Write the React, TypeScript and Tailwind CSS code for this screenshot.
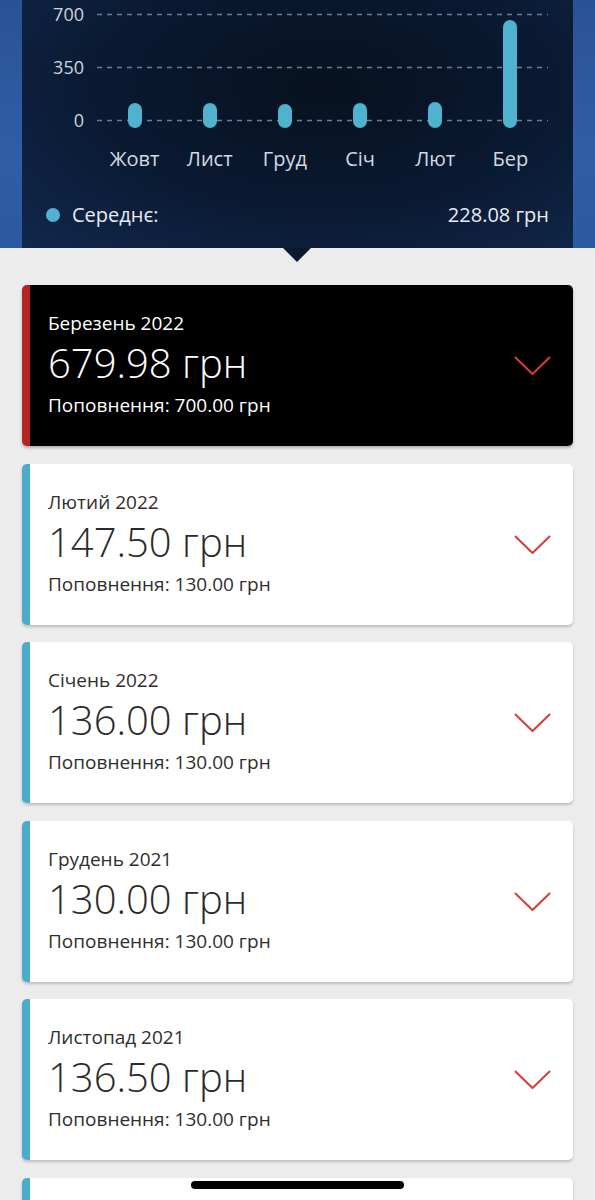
import React from "react";

const bars = [
  { label: "Жовт", top: 103 },
  { label: "Лист", top: 103 },
  { label: "Груд", top: 104 },
  { label: "Січ", top: 103 },
  { label: "Лют", top: 102 },
  { label: "Бер", top: 20 },
];

const cards = [
  { title: "Березень 2022", amount: "679.98 грн", sub: "Поповнення: 700.00 грн", dark: true },
  { title: "Лютий 2022", amount: "147.50 грн", sub: "Поповнення: 130.00 грн" },
  { title: "Січень 2022", amount: "136.00 грн", sub: "Поповнення: 130.00 грн" },
  { title: "Грудень 2021", amount: "130.00 грн", sub: "Поповнення: 130.00 грн" },
  { title: "Листопад 2021", amount: "136.50 грн", sub: "Поповнення: 130.00 грн" },
];

function Chevron() {
  return (
    <svg width="37" height="20" viewBox="0 0 37 20" fill="none">
      <path d="M1.5 1.5 L18.5 18 L35.5 1.5" stroke="#d63d35" strokeWidth="2" strokeLinecap="round" strokeLinejoin="round" />
    </svg>
  );
}

export default function App() {
  return (
    <div
      className="relative w-[595px] h-[1200px] overflow-hidden bg-[#ececec]"
      style={{ fontFamily: '"Open Sans", "Noto Sans", sans-serif' }}
    >
      {/* Header */}
      <div className="relative h-[248px] px-[22px] bg-[linear-gradient(180deg,#2a5296_0%,#2f5ea6_60%,#2b5aa2_100%)]">
        <div className="relative h-full flex flex-col bg-[radial-gradient(ellipse_at_55%_35%,#07111f_0%,#0a1a33_55%,#11284c_100%)]">
          {/* chart */}
          <div className="flex h-[130px]">
            <div className="w-[62px] flex flex-col gap-[25px] text-right text-[18px] text-[#cdd4de]">
              <div className="h-[28px] leading-[28px]">700</div>
              <div className="h-[28px] leading-[28px]">350</div>
              <div className="h-[28px] leading-[28px]">0</div>
            </div>
            <div className="relative ml-[13px] w-[451px] h-[130px]">
              <svg className="absolute inset-0" width="451" height="130">
                {[14, 67, 120].map((y) => (
                  <line key={y} x1="0" x2="451" y1={y + 0.5} y2={y + 0.5} stroke="#6c7d97" strokeWidth="1.3" strokeDasharray="5 5" />
                ))}
              </svg>
              <div className="absolute inset-0 grid grid-cols-6">
                {bars.map((b) => (
                  <div key={b.label} className="relative flex justify-center">
                    <div
                      className="w-[14px] rounded-full bg-[#4fb2cf]"
                      style={{ marginTop: b.top, height: 128 - b.top }}
                    />
                  </div>
                ))}
              </div>
            </div>
          </div>
          <div className="ml-[75px] mt-[15px] w-[451px] grid grid-cols-6 text-[20px] leading-[28px] text-[#d3d9e2]">
            {bars.map((b) => (
              <div key={b.label} className="text-center">
                {b.label}
              </div>
            ))}
          </div>
          <div className="mt-[28px] px-[24px] flex items-center justify-between text-[20px] leading-[28px] text-[#e8ecf2]">
            <div className="flex items-center">
              <span className="w-[14px] h-[14px] rounded-full bg-[#4fb2cf]" />
              <span className="ml-[12px]">Середнє:</span>
            </div>
            <span>228.08 грн</span>
          </div>
        </div>
        {/* pointer */}
        <div className="absolute left-[283px] top-[248px] w-0 h-0 border-l-[14px] border-r-[14px] border-t-[14px] border-l-transparent border-r-transparent border-t-[#0b1a31]" />
      </div>

      {/* Cards */}
      <div className="px-[22px] pt-[37px] flex flex-col gap-[17.5px]">
        {cards.map((c) => (
          <div
            key={c.title}
            className={
              c.dark
                ? "h-[161px] shrink-0 flex items-center rounded-[5px] border-l-[8px] border-[#b5251d] bg-black shadow-[0_2px_3px_rgba(0,0,0,0.25)]"
                : "h-[161px] shrink-0 flex items-center rounded-[5px] border-l-[8px] border-[#4aacca] bg-white shadow-[0_2px_3px_rgba(0,0,0,0.2)]"
            }
          >
            <div className="flex-1 self-start pl-[18px] pt-[25px]">
              <div className={c.dark ? "text-[19px] leading-[26px] text-white" : "text-[19px] leading-[26px] text-[#2e2e2e]"}>
                {c.title}
              </div>
              <div
                className={
                  c.dark
                    ? "mt-[3px] text-[40px] leading-[48px] font-light text-white"
                    : "mt-[3px] text-[40px] leading-[48px] font-light text-[#2a2a2a]"
                }
              >
                {c.amount}
              </div>
              <div className={c.dark ? "mt-[5px] text-[19px] leading-[26px] text-white" : "mt-[5px] text-[19px] leading-[26px] text-[#2e2e2e]"}>
                {c.sub}
              </div>
            </div>
            <div className="pr-[22px] pt-[1px]">
              <Chevron />
            </div>
          </div>
        ))}
        {/* next card, cut off by the screen edge */}
        <div className="h-[161px] shrink-0 rounded-[5px] border-l-[8px] border-[#4aacca] bg-white shadow-[0_2px_3px_rgba(0,0,0,0.2)]" />
      </div>

      {/* home indicator */}
      <div className="absolute left-[191px] top-[1181px] w-[213px] h-[8px] rounded-full bg-black" />
    </div>
  );
}
